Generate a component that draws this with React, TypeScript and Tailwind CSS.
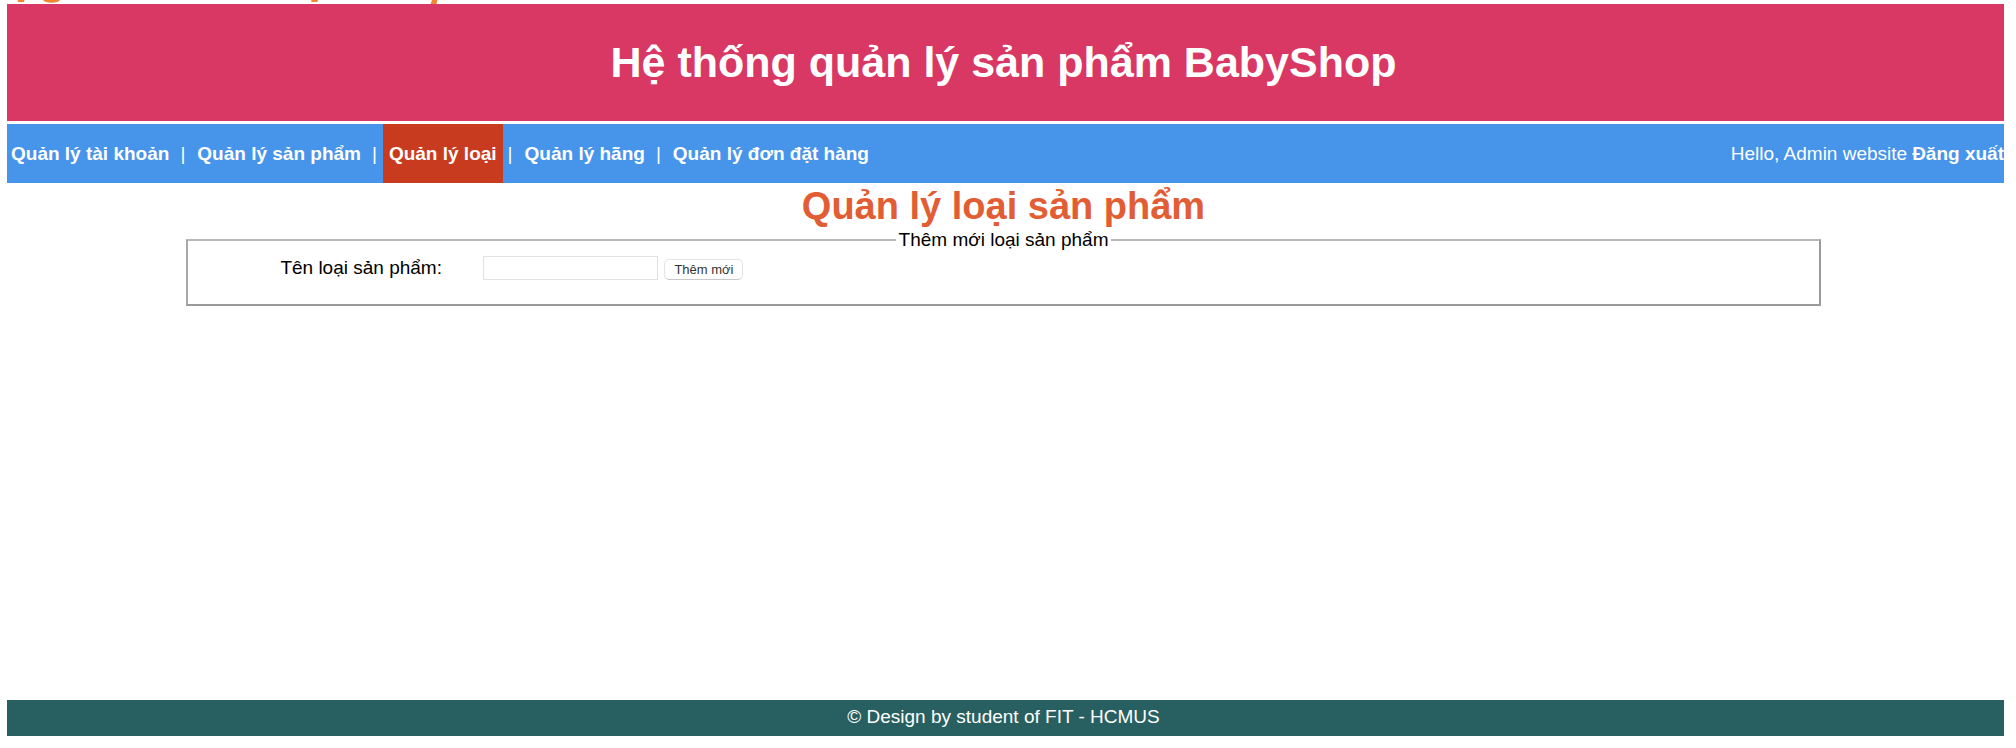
import React from "react";

type NavItem = { label: string; active?: boolean };

const navItems: NavItem[] = [
  { label: "Quản lý tài khoản" },
  { label: "Quản lý sản phẩm" },
  { label: "Quản lý loại", active: true },
  { label: "Quản lý hãng" },
  { label: "Quản lý đơn đặt hàng" },
];

function TopMarks() {
  return (
    <svg className="block h-1 w-[440px]" viewBox="0 0 440 4" fill="#f0862f" aria-hidden="true">
      <path d="M11 0h6.500l-.7 2h-6.200z" />
      <path d="M36 0q2 2.700 8.500 2.700t8.500-2.700z" />
      <path d="M304.500 0h6.500l-.6 2h-6.300z" />
      <path d="M425 0h5.500l-1.200 4h-5.700z" />
    </svg>
  );
}

function NavBar() {
  return (
    <nav className="mt-[3px] flex h-[59px] items-stretch justify-between bg-[#4695eb] pl-1 text-white">
      <ul className="flex items-stretch">
        {navItems.map((item, i) => (
          <li key={item.label} className="flex items-center">
            {i > 0 && <span className="pr-[6px] pl-[5px]">|</span>}
            <a
              href="#"
              className={
                item.active
                  ? "flex h-full items-center bg-[#c93b1e] px-[6px] font-bold"
                  : i === 0
                    ? "flex h-full items-center pr-[6px] font-bold"
                    : "flex h-full items-center px-[6px] font-bold"
              }
            >
              {item.label}
            </a>
          </li>
        ))}
      </ul>
      <p className="flex items-center gap-[5px]">
        <span>Hello, Admin website</span>
        <a href="#" className="font-bold">
          Đăng xuất
        </a>
      </p>
    </nav>
  );
}

function AddCategoryForm() {
  return (
    <form onSubmit={(e) => e.preventDefault()}>
      <fieldset className="mx-auto h-[77px] w-[82%] border-2 border-t-[#b8b8b8] border-r-[#9a9a9a] border-b-[#9a9a9a] border-l-[#a8a8a8]">
        <legend className="mx-auto px-[3px]">Thêm mới loại sản phẩm</legend>
        <div className="flex items-center pt-[5px] pl-[92px]">
          <label htmlFor="ten-loai" className="w-[203px]">
            Tên loại sản phẩm:
          </label>
          <input id="ten-loai" type="text" className="h-6 w-[175px] border border-[#e2e2e2] bg-white px-1" />
          <button
            type="submit"
            className="ml-[6px] h-[21px] self-end rounded-[5px] border border-[#e4e4e4] border-b-[#c8c8c8] bg-white px-[9px] text-[13px] leading-none text-[#333]"
          >
            Thêm mới
          </button>
        </div>
      </fieldset>
    </form>
  );
}

export default function App() {
  return (
    <div className="flex min-h-screen flex-col bg-white pr-3 pb-3 pl-[7px] font-['Liberation_Sans',Arial,sans-serif] text-[19px] leading-[22px] text-black">
      <TopMarks />
      <header className="flex h-[117px] items-center justify-center bg-[#d93764] pr-1 pb-[2px]">
        <h1 className="text-[43px] leading-[50px] font-bold text-white">Hệ thống quản lý sản phẩm BabyShop</h1>
      </header>
      <NavBar />
      <main className="flex-1 pr-1">
        <h2 className="pt-px text-center text-[38px] leading-[45px] font-bold text-[#e35d34]">Quản lý loại sản phẩm</h2>
        <AddCategoryForm />
      </main>
      <footer className="flex h-9 items-center justify-center bg-[#286062] pr-1 pb-[2px] text-white">
        © Design by student of FIT - HCMUS
      </footer>
    </div>
  );
}
